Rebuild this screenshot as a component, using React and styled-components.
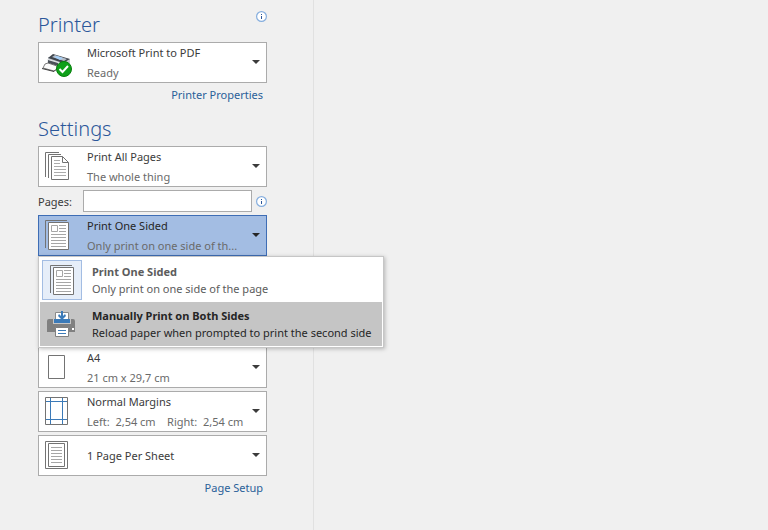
import React from 'react';
import styled, { createGlobalStyle } from 'styled-components';

const GlobalStyle = createGlobalStyle`
    * {
        box-sizing: border-box;
    }

    body {
        margin: 0;
        background: #f0f0f0;
        color: #3b3b3b;
        font-family: "Noto Sans", "Open Sans", sans-serif;
        font-size: 11px;
    }

    button, input {
        font: inherit;
        color: inherit;
    }

    h2 {
        margin: 0;
    }
`;

const Page = styled.div`
    display: flex;
    min-height: 100vh;
`;

const Sidebar = styled.aside`
    flex: 0 0 314px;
    padding: 9px 46px 16px 38px;
    border-right: 1px solid #e1e1e1;
`;

const Preview = styled.main`
    flex: 1;
`;

const Section = styled.section`
    margin-bottom: 8px;
`;

const Header = styled.div`
    display: flex;
    justify-content: space-between;
    height: 33px;
`;

const Heading = styled.h2`
    color: #2b579a;
    font-size: 20px;
    line-height: 32px;
    font-weight: 300;
`;

const InfoButton = styled.button`
    display: flex;
    width: 11px;
    height: 11px;
    padding: 0;
    border: 0;
    background: none;
`;

const HeaderInfo = styled(InfoButton)`
    margin-top: 2px;
`;

const Stack = styled.div`
    display: grid;
    gap: 3px;
`;

const Picker = styled.button`
    display: grid;
    grid-template-columns: 45px 1fr 20px;
    grid-template-rows: 38px;
    align-items: center;
    width: 100%;
    height: 41px;
    padding: 1px 0 0 3px;
    border: 1px solid ${({ $open }) => ($open ? '#3e6db5' : '#ababab')};
    background: ${({ $open }) => ($open ? '#a3bde3' : '#fff')};
    color: ${({ $open }) => ($open ? '#262626' : '#3b3b3b')};
    text-align: left;

    > svg {
        display: block;
    }
`;

const Lines = styled.span`
    display: grid;
    min-width: 0;
    line-height: 20px;
    white-space: pre;
`;

const Sub = styled.span`
    color: #6a6a6a;
`;

const Caret = styled.span`
    width: 7px;
    margin: 0 0 2px 6px;
    border: solid transparent;
    border-width: 4px 4px 0;
    border-top-color: currentColor;
`;

const LinkRow = styled.div`
    display: flex;
    justify-content: flex-end;
    padding: 2px 4px 0 0;
    line-height: 20px;

    a {
        color: #2a6099;
        text-decoration: none;
    }
`;

const PagesRow = styled.div`
    display: grid;
    grid-template-columns: 45px 1fr 11px;
    align-items: center;
    height: 22px;

    input {
        width: calc(100% - 4px);
        height: 22px;
        padding: 0 4px;
        border: 1px solid #ababab;
        background: #fff;
    }
`;

/* keeps room for the options that sit behind the open menu */
const Dropdown = styled.div`
    position: relative;
    padding-bottom: 88px;
`;

const MenuBox = styled.div`
    position: absolute;
    z-index: 1;
    top: 41px;
    left: 0;
    width: 346px;
    padding: 1px;
    border: 1px solid #c6c6c6;
    background: #fff;
    box-shadow: 1px 1px 4px rgba(0, 0, 0, 0.25);
`;

const MenuItem = styled.button`
    display: flex;
    align-items: center;
    gap: 10px;
    width: 100%;
    height: 44px;
    padding: 0 2px;
    border: 0;
    background: ${({ $hovered }) => ($hovered ? '#c5c5c5' : 'transparent')};
    color: ${({ $hovered }) => ($hovered ? '#262626' : '#5c5c5c')};
    line-height: 17px;
    text-align: left;
    white-space: nowrap;

    strong {
        display: block;
    }
`;

const MenuIcon = styled.span`
    display: grid;
    place-items: center;
    flex: 0 0 40px;
    height: 40px;
    padding: 2px 0 0 2px;
    border: 1px solid ${({ $selected }) => ($selected ? '#a3bde3' : 'transparent')};
    background: ${({ $selected }) => ($selected ? '#e6eef9' : 'transparent')};
`;

const InfoIcon = () => (
    <svg width="11" height="11" viewBox="0 0 11 11" aria-hidden="true">
        <circle cx="5.5" cy="5.5" r="4.9" fill="#fff" stroke="#86aede" strokeWidth="1.2" />
        <path d="M5 3h1v1H5zM5 5h1v3H5z" fill="#2b579a" />
    </svg>
);

const PrinterIcon = () => (
    <svg width="32" height="32" viewBox="0 0 32 32" aria-hidden="true">
        <path d="m6 10 22 2v7l-9 5-13-5z" fill="#c9cdd2" />
        <path d="m6 11 5-4 17 5-7 4z" fill="#3f454d" />
        <path d="m10 10 3-2 12 4-3 2z" fill="#b4bcc6" />
        <path d="m12 10 3-1 6 2-3 2z" fill="#a5d0fa" />
        <path d="m5 12 14 4v6L5 17z" fill="#eceef0" />
        <path d="m6 13 10 3v3L6 16z" fill="#4a5058" />
        <path d="m3 17 3-1 9 3v3l-3 2-11-3z" fill="#fafafa" stroke="#5b5b5b" strokeWidth=".8" />
        <path d="m0 21.5 12 3 2-2" fill="none" stroke="#3d3d3d" />
        <circle cx="22" cy="22" r="7.5" fill="#0fa01a" stroke="#07800d" />
        <path d="m17.5 22 3 3 5.5-6" fill="none" stroke="#fff" strokeWidth="2" />
    </svg>
);

const AllPagesIcon = () => (
    <svg width="32" height="32" viewBox="0 0 32 32" fill="none" stroke="#737373" aria-hidden="true">
        <path d="M3.5 26V1.5H17M6.5 27V3.5H19" />
        <path d="M9.5 5.5h11l6 6v17h-17z" fill="#fff" />
        <path d="M20.5 5.5v6h6" />
        <path d="M12 9.5h6M12 12.5h6M12 15.5h12M12 18.5h12M12 21.5h12M12 24.5h12" stroke="#ababab" />
    </svg>
);

const OneSidedIcon = () => (
    <svg width="32" height="32" viewBox="0 0 32 32" fill="none" stroke="#737373" aria-hidden="true">
        <path d="M3.5 28V.5H25" />
        <path d="M6.5 2.5h20v27h-20z" fill="#fff" />
        <path d="M9.5 5.5h6v6h-6zM17 5.5h7M17 8.5h7M17 11.5h7M9 14.5h15M9 17.5h15M9 20.5h15M9 23.5h15M9 26.5h15" stroke="#a6a6a6" />
    </svg>
);

const BothSidesIcon = () => (
    <svg width="32" height="32" viewBox="0 0 32 32" aria-hidden="true">
        <path d="M8.5 12V3.5h13V12" fill="#fff" stroke="#8a8a8a" />
        <path d="M0 12a2 2 0 0 1 2-2h4v5h18v-5h2a2 2 0 0 1 2 2v11H0z" fill="#808080" />
        <path d="M7 10h16v4H7z" fill="#3b7ab8" />
        <path d="M9 4h12v6H9z" fill="#fff" />
        <path d="M14 2h2v5l2-2 1 2-4 4-4-4 1-2 2 2z" fill="#3b7ab8" />
        <path d="M25 19h2v2h-2z" fill="#fff" />
        <path d="M8.5 18.5h13v9h-13z" fill="#fff" stroke="#808080" />
        <path d="M11 21.5h8M11 24.5h8" stroke="#3b7ab8" />
    </svg>
);

const PaperIcon = () => (
    <svg width="32" height="32" viewBox="0 0 32 32" aria-hidden="true">
        <path d="M6.5 3.5h16v23h-16z" fill="#fff" stroke="#737373" />
    </svg>
);

const MarginsIcon = () => (
    <svg width="32" height="32" viewBox="0 0 32 32" fill="none" aria-hidden="true">
        <path d="M8.5 2v26M20.5 2v26M4 5.5h22M4 23.5h22" stroke="#3b7ab8" />
        <path d="M3.5 1.5h22v27h-22z" stroke="#737373" />
    </svg>
);

const SheetIcon = () => (
    <svg width="32" height="32" viewBox="0 0 32 32" fill="none" stroke="#737373" aria-hidden="true">
        <path d="M3.5 1.5h22v27h-22zM6.5 3.5h16v23h-16z" />
        <path d="M9 7.5h11M9 10.5h11M9 13.5h11M9 16.5h11M9 19.5h11M9 22.5h11" stroke="#a6a6a6" />
    </svg>
);

const Option = ({ icon, title, text, open }) => (
    <Picker type='button' $open={open} aria-haspopup='menu' aria-expanded={!!open}>
        {icon}
        <Lines>
            <span>{title}</span>
            {text && <Sub>{text}</Sub>}
        </Lines>
        <Caret />
    </Picker>
);

const App = () => {
  return (
    <>
        <GlobalStyle />
        <Page>
            <Sidebar>
                <Section>
                    <Header>
                        <Heading>Printer</Heading>
                        <HeaderInfo type='button' aria-label='Printer status'><InfoIcon /></HeaderInfo>
                    </Header>
                    <Option icon={<PrinterIcon />} title='Microsoft Print to PDF' text='Ready' />
                    <LinkRow><a href='#properties'>Printer Properties</a></LinkRow>
                </Section>
                <Section>
                    <Header>
                        <Heading>Settings</Heading>
                    </Header>
                    <Stack>
                        <Option icon={<AllPagesIcon />} title='Print All Pages' text='The whole thing' />
                        <PagesRow>
                            <label htmlFor='pages'>Pages:</label>
                            <input id='pages' type='text' />
                            <InfoButton type='button' aria-label='About page ranges'><InfoIcon /></InfoButton>
                        </PagesRow>
                        <Dropdown>
                            <Option open icon={<OneSidedIcon />} title='Print One Sided' text='Only print on one side of th...' />
                            <MenuBox role='menu'>
                                <MenuItem type='button' role='menuitem'>
                                    <MenuIcon $selected><OneSidedIcon /></MenuIcon>
                                    <span><strong>Print One Sided</strong>Only print on one side of the page</span>
                                </MenuItem>
                                <MenuItem type='button' role='menuitem' $hovered>
                                    <MenuIcon><BothSidesIcon /></MenuIcon>
                                    <span><strong>Manually Print on Both Sides</strong>Reload paper when prompted to print the second side</span>
                                </MenuItem>
                            </MenuBox>
                        </Dropdown>
                        <Option icon={<PaperIcon />} title='A4' text='21 cm x 29,7 cm' />
                        <Option icon={<MarginsIcon />} title='Normal Margins' text='Left:  2,54 cm    Right:  2,54 cm' />
                        <Option icon={<SheetIcon />} title='1 Page Per Sheet' />
                    </Stack>
                    <LinkRow><a href='#setup'>Page Setup</a></LinkRow>
                </Section>
            </Sidebar>
            <Preview />
        </Page>
    </>
  );
};

export default App;
